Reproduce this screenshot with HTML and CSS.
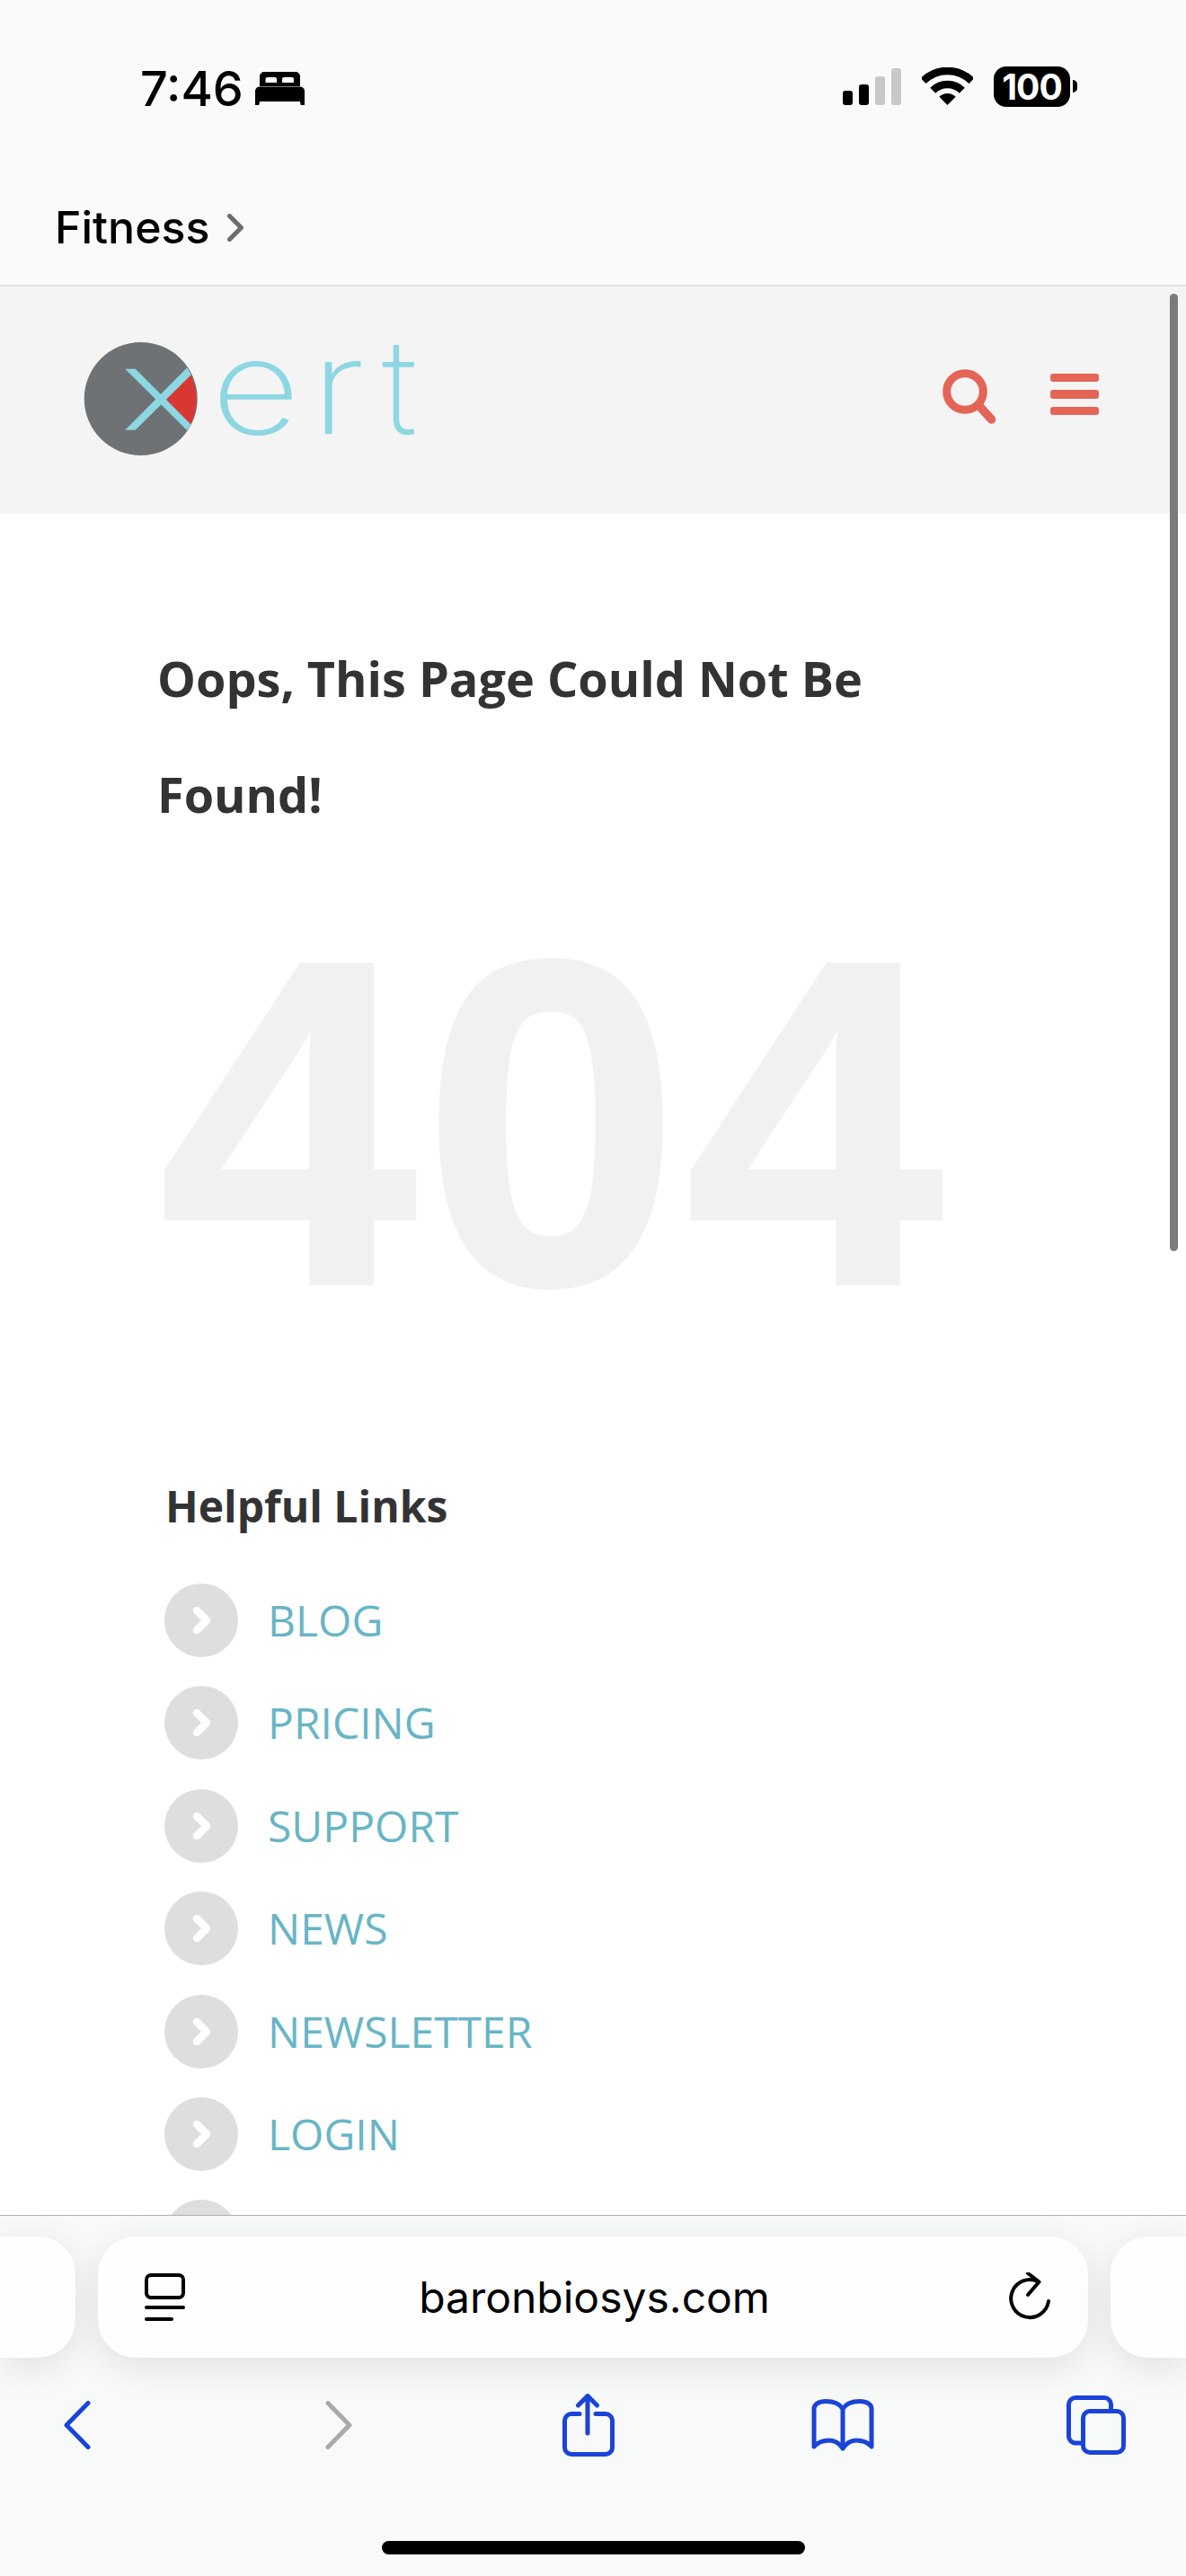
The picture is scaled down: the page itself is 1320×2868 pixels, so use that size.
FILE: index.html
```html
<!DOCTYPE html>
<html lang="en">
<head>
    <meta charset="UTF-8">
    <title>Oops, This Page Could Not Be Found!</title>
    <link rel="stylesheet" href="styles.css">
</head>
<body>
    <div class="browser-top">
        <div class="status-bar">
            <span class="clock">7:46</span>
            <svg class="bed-icon" width="55" height="37" viewBox="0 0 55 37">
                <path fill-rule="evenodd" d="M10 0H45a5 5 0 0 1 5 5V16H5V5a5 5 0 0 1 5-5ZM13.500 6a2 2 0 0 0-2 2V12H24V8a2 2 0 0 0-2-2ZM32 6a2 2 0 0 0-2 2V12H43V8a2 2 0 0 0-2-2Z"/>
                <path d="M5 16.500H50a5 5 0 0 1 5 5V35a2 2 0 0 1-4.500 1L50 33H5L4.500 36A2 2 0 0 1 0 35V21.500a5 5 0 0 1 5-5Z"/>
            </svg>
            <div class="status-right">
                <div class="signal">
                    <span class="bar bar-1"></span>
                    <span class="bar bar-2"></span>
                    <span class="bar bar-3"></span>
                    <span class="bar bar-4"></span>
                </div>
                <svg class="wifi-icon" width="57" height="42" viewBox="0 0 57 42">
                    <path d="M1.600 15.100A38 38 0 0 1 55.400 15.100" fill="none" stroke="#000" stroke-width="8.500"/>
                    <path d="M12.200 25.700A23 23 0 0 1 44.800 25.700" fill="none" stroke="#000" stroke-width="8.500"/>
                    <path d="M28.500 42L19.300 32.800A13 13 0 0 1 37.700 32.800Z"/>
                </svg>
                <div class="battery"><span class="battery-level">100</span></div>
                <span class="battery-nub"></span>
            </div>
        </div>
        <div class="back-link">
            <span>Fitness</span>
            <svg width="18" height="31" viewBox="0 0 18 31">
                <path d="M2.500 2.500L15.500 15.500L2.500 28.500" fill="none" stroke="#6b6b70" stroke-width="5" stroke-linecap="round" stroke-linejoin="round"/>
            </svg>
        </div>
    </div>

    <header class="site-header">
        <svg class="logo" width="440" height="200" viewBox="0 0 440 200">
            <circle cx="96.700" cy="104" r="63" fill="#6f7274"/>
            <path d="M125 105L152 77A63 63 0 0 1 152 133Z" fill="#d93733"/>
            <polygon points="79.300,70.700 90.700,70.700 152.700,132.700 148.300,139.300" fill="#8dd7e2"/>
            <polygon points="79.300,138.700 90.700,138.700 152.700,77.300 148.300,69.300" fill="#8dd7e2"/>
            <text class="logo-text" transform="translate(175 143) scale(1.180 1)">e</text>
            <text class="logo-text" transform="translate(286 143) scale(1.200 1)">r</text>
            <text class="logo-text" transform="translate(365 143)">t</text>
        </svg>
        <div class="header-icons">
            <svg class="search-icon" width="60" height="62" viewBox="0 0 60 62">
                <circle cx="25" cy="25" r="20.300" fill="none" stroke="#e46456" stroke-width="9"/>
                <path d="M40 40L54.500 56" stroke="#e46456" stroke-width="9.500" stroke-linecap="round"/>
            </svg>
            <div class="menu-icon">
                <span></span>
                <span></span>
                <span></span>
            </div>
        </div>
    </header>
    <div class="scrollbar"></div>

    <main class="content">
        <h1>Oops, This Page Could Not Be Found!</h1>
        <div class="big-404">404</div>
        <h2>Helpful Links</h2>
        <ul class="links">
            <li><span class="bullet"><svg width="82" height="82" viewBox="0 0 82 82"><path d="M36 30L47 41L36 52" fill="none" stroke="#fff" stroke-width="8.500" stroke-linecap="round" stroke-linejoin="round"/></svg></span><a href="#">Blog</a></li>
            <li><span class="bullet"><svg width="82" height="82" viewBox="0 0 82 82"><path d="M36 30L47 41L36 52" fill="none" stroke="#fff" stroke-width="8.500" stroke-linecap="round" stroke-linejoin="round"/></svg></span><a href="#">Pricing</a></li>
            <li><span class="bullet"><svg width="82" height="82" viewBox="0 0 82 82"><path d="M36 30L47 41L36 52" fill="none" stroke="#fff" stroke-width="8.500" stroke-linecap="round" stroke-linejoin="round"/></svg></span><a href="#">Support</a></li>
            <li><span class="bullet"><svg width="82" height="82" viewBox="0 0 82 82"><path d="M36 30L47 41L36 52" fill="none" stroke="#fff" stroke-width="8.500" stroke-linecap="round" stroke-linejoin="round"/></svg></span><a href="#">News</a></li>
            <li><span class="bullet"><svg width="82" height="82" viewBox="0 0 82 82"><path d="M36 30L47 41L36 52" fill="none" stroke="#fff" stroke-width="8.500" stroke-linecap="round" stroke-linejoin="round"/></svg></span><a href="#">Newsletter</a></li>
            <li><span class="bullet"><svg width="82" height="82" viewBox="0 0 82 82"><path d="M36 30L47 41L36 52" fill="none" stroke="#fff" stroke-width="8.500" stroke-linecap="round" stroke-linejoin="round"/></svg></span><a href="#">Login</a></li>
            <li><span class="bullet"></span></li>
        </ul>
    </main>

    <div class="browser-bottom">
        <div class="tabs">
            <div class="pill pill-side"></div>
            <div class="pill pill-main">
                <svg class="reader-icon" width="45" height="54" viewBox="0 0 45 54">
                    <rect x="2" y="2" width="41" height="25" rx="5" fill="none" stroke="#000" stroke-width="4"/>
                    <path d="M2 38H43M2 51H30" stroke="#000" stroke-width="4" stroke-linecap="round"/>
                </svg>
                <span class="url">baronbiosys.com</span>
                <svg class="reload-icon" width="46" height="56" viewBox="0 0 46 56">
                    <path d="M33 10.500A21 21 0 1 0 44 32" fill="none" stroke="#000" stroke-width="4" stroke-linecap="round"/>
                    <path d="M21 1L33.500 10.500L21 25" fill="none" stroke="#000" stroke-width="4" stroke-linecap="round" stroke-linejoin="round"/>
                </svg>
            </div>
            <div class="pill pill-side pill-right"></div>
        </div>
        <div class="toolbar">
            <svg class="tool-back" width="30" height="54" viewBox="0 0 30 54">
                <path d="M27 2.500L3 27L27 51.500" fill="none" stroke="#1a44d8" stroke-width="5" stroke-linecap="round" stroke-linejoin="round"/>
            </svg>
            <svg class="tool-forward" width="30" height="54" viewBox="0 0 30 54">
                <path d="M3 2.500L27 27L3 51.500" fill="none" stroke="#a9a9a9" stroke-width="5" stroke-linecap="round" stroke-linejoin="round"/>
            </svg>
            <svg class="tool-share" width="58" height="70" viewBox="0 0 58 70">
                <path d="M19 22.500H10a7.500 7.500 0 0 0-7.500 7.500V60a7.500 7.500 0 0 0 7.500 7.500H48a7.500 7.500 0 0 0 7.500-7.500V30a7.500 7.500 0 0 0-7.500-7.500H37" fill="none" stroke="#1a44d8" stroke-width="5" stroke-linecap="round"/>
                <path d="M28 3V44M17.500 13L28 2.500L38.500 13" fill="none" stroke="#1a44d8" stroke-width="5" stroke-linecap="round" stroke-linejoin="round"/>
            </svg>
            <svg class="tool-book" width="70" height="58" viewBox="0 0 70 58">
                <path d="M35 11C31 4 24 2.500 16 2.500C8 2.500 3 6 3 11V53C8 47 14 46 20 46C27 46 31 49 35 55C39 49 43 46 50 46C56 46 62 47 67 53V11C67 6 62 2.500 54 2.500C46 2.500 39 4 35 11V55" fill="none" stroke="#1a44d8" stroke-width="5" stroke-linejoin="round" stroke-linecap="round"/>
            </svg>
            <svg class="tool-tabs" width="66" height="66" viewBox="0 0 66 66">
                <path d="M16 53H10a7.500 7.500 0 0 1-7.500-7.500V10A7.500 7.500 0 0 1 10 2.500H42A7.500 7.500 0 0 1 49.500 10V15" fill="none" stroke="#1a44d8" stroke-width="5"/>
                <rect x="18.500" y="17.500" width="45" height="46" rx="7.500" fill="none" stroke="#1a44d8" stroke-width="5"/>
            </svg>
        </div>
        <div class="home-indicator"></div>
    </div>
</body>
</html>
```

FILE: styles.css
```css
* {
    box-sizing: border-box;
}
body {
    font-family: "Open Sans", sans-serif;
    margin: 0;
    padding: 0;
    width: 1320px;
    height: 2868px;
    background: white;
    display: flex;
    flex-direction: column;
    overflow: hidden;
    position: relative;
}

/* ios status bar + back link */
.browser-top {
    height: 319px;
    background: #fafafa;
    border-bottom: 2px solid #e2e2e2;
    font-family: Inter, sans-serif;
    color: black;
}
.status-bar {
    display: flex;
    align-items: flex-start;
    height: 222px;
    padding: 66px 0 0 156px;
}
.clock {
    font-size: 54px;
    font-weight: 500;
    line-height: 66px;
}
.bed-icon {
    margin: 14px 0 0 13px;
}
.status-right {
    display: flex;
    align-items: flex-start;
    margin-left: auto;
    margin-top: 8px;
    padding-right: 121px;
}
.signal {
    display: flex;
    align-items: flex-end;
    gap: 7px;
    height: 43px;
}
.bar {
    width: 11px;
    border-radius: 3px;
    background: black;
}
.bar-1 { height: 16px; }
.bar-2 { height: 23px; }
.bar-3 { height: 32px; background: #c8c8c8; }
.bar-4 { height: 41px; background: #c8c8c8; }
.wifi-icon {
    margin: 1px 0 0 23px;
}
.battery {
    width: 85px;
    height: 45px;
    margin: 0 0 0 23px;
    border-radius: 14px;
    background: black;
    display: flex;
    align-items: center;
    justify-content: center;
}
.battery-level {
    color: white;
    font-size: 39px;
    font-weight: 700;
    line-height: 45px;
    letter-spacing: -1px;
}
.battery-nub {
    width: 5px;
    height: 14px;
    margin: 15px 0 0 3px;
    border-radius: 0 7px 7px 0;
    background: black;
}
.back-link {
    display: flex;
    align-items: center;
    gap: 20px;
    padding-left: 61px;
    font-size: 50px;
    font-weight: 500;
    line-height: 62px;
}

/* site header */
.site-header {
    height: 253px;
    background: #f4f4f4;
    display: flex;
    align-items: flex-start;
    flex: none;
}
.logo {
    margin: 21px 0 0 60px;
}
.logo-text {
    font-family: Inter, sans-serif;
    font-size: 146px;
    font-weight: 250;
    fill: #8dd7e2;
}
.header-icons {
    display: flex;
    align-items: flex-start;
    margin-left: auto;
    padding: 92px 97px 0 0;
}
.search-icon {
    margin-right: 60px;
}
.menu-icon {
    display: flex;
    flex-direction: column;
    gap: 9px;
    width: 54px;
    margin-top: 5px;
}
.menu-icon span {
    height: 9.400px;
    border-radius: 3px;
    background: #e46456;
}
.scrollbar {
    position: absolute;
    left: 1302px;
    top: 327px;
    width: 9px;
    height: 1066px;
    border-radius: 5px;
    background: #7b7b7b;
}

/* 404 content */
.content {
    flex: 1;
    overflow: hidden;
    padding: 119px 0 0 175px;
    color: #333;
}
h1 {
    margin: 0;
    width: 800px;
    font-size: 54px;
    font-weight: 700;
    line-height: 129px;
}
.big-404 {
    font-family: "Liberation Sans", Arial, sans-serif;
    font-size: 516px;
    font-weight: 700;
    line-height: 520px;
    letter-spacing: 6px;
    -webkit-text-stroke: 4px #f1f1f1;
    color: #f1f1f1;
    margin: 41px 0 0 2px;
}
h2 {
    margin: 135px 0 0 9px;
    font-size: 48px;
    font-weight: 700;
    line-height: 64px;
}
.links {
    list-style: none;
    margin: 54px 0 0 8px;
    padding: 0;
    display: flex;
    flex-direction: column;
    gap: 32.400px;
}
.links li {
    display: flex;
    align-items: center;
    gap: 33px;
    height: 82px;
}
.bullet {
    width: 82px;
    height: 82px;
    border-radius: 50%;
    background: #dedede;
    flex: none;
}
.bullet svg {
    display: block;
}
.links a {
    color: #68b5c5;
    font-size: 48px;
    font-weight: 400;
    line-height: 64px;
    text-decoration: none;
    text-transform: uppercase;
}

/* safari bottom bar */
.browser-bottom {
    height: 402px;
    flex: none;
    background: #f8f9f9;
    border-top: 1px solid #b2b2b2;
    font-family: Inter, sans-serif;
}
.tabs {
    display: flex;
    gap: 25px;
    margin-top: 23px;
    height: 135px;
}
.pill {
    background: #fefefe;
    border-radius: 42px;
    box-shadow: 0 10px 40px rgba(0, 0, 0, 0.1);
}
.pill-side {
    width: 84px;
    border-radius: 0 42px 42px 0;
}
.pill-right {
    border-radius: 42px 0 0 42px;
}
.pill-main {
    flex: 1;
    display: flex;
    align-items: center;
    justify-content: space-between;
    padding: 0 42px 0 52px;
}
.url {
    font-size: 48px;
    line-height: 62px;
    color: black;
    margin-right: 6px;
}
.toolbar {
    display: flex;
    align-items: center;
    height: 150px;
    padding-left: 71px;
}
.tool-forward { margin-left: 261px; }
.tool-share { margin-left: 234px; }
.tool-book { margin-left: 219px; }
.tool-tabs { margin-left: 214px; }
.home-indicator {
    width: 471px;
    height: 15px;
    margin: 54px 0 0 425px;
    border-radius: 8px;
    background: black;
}
```
